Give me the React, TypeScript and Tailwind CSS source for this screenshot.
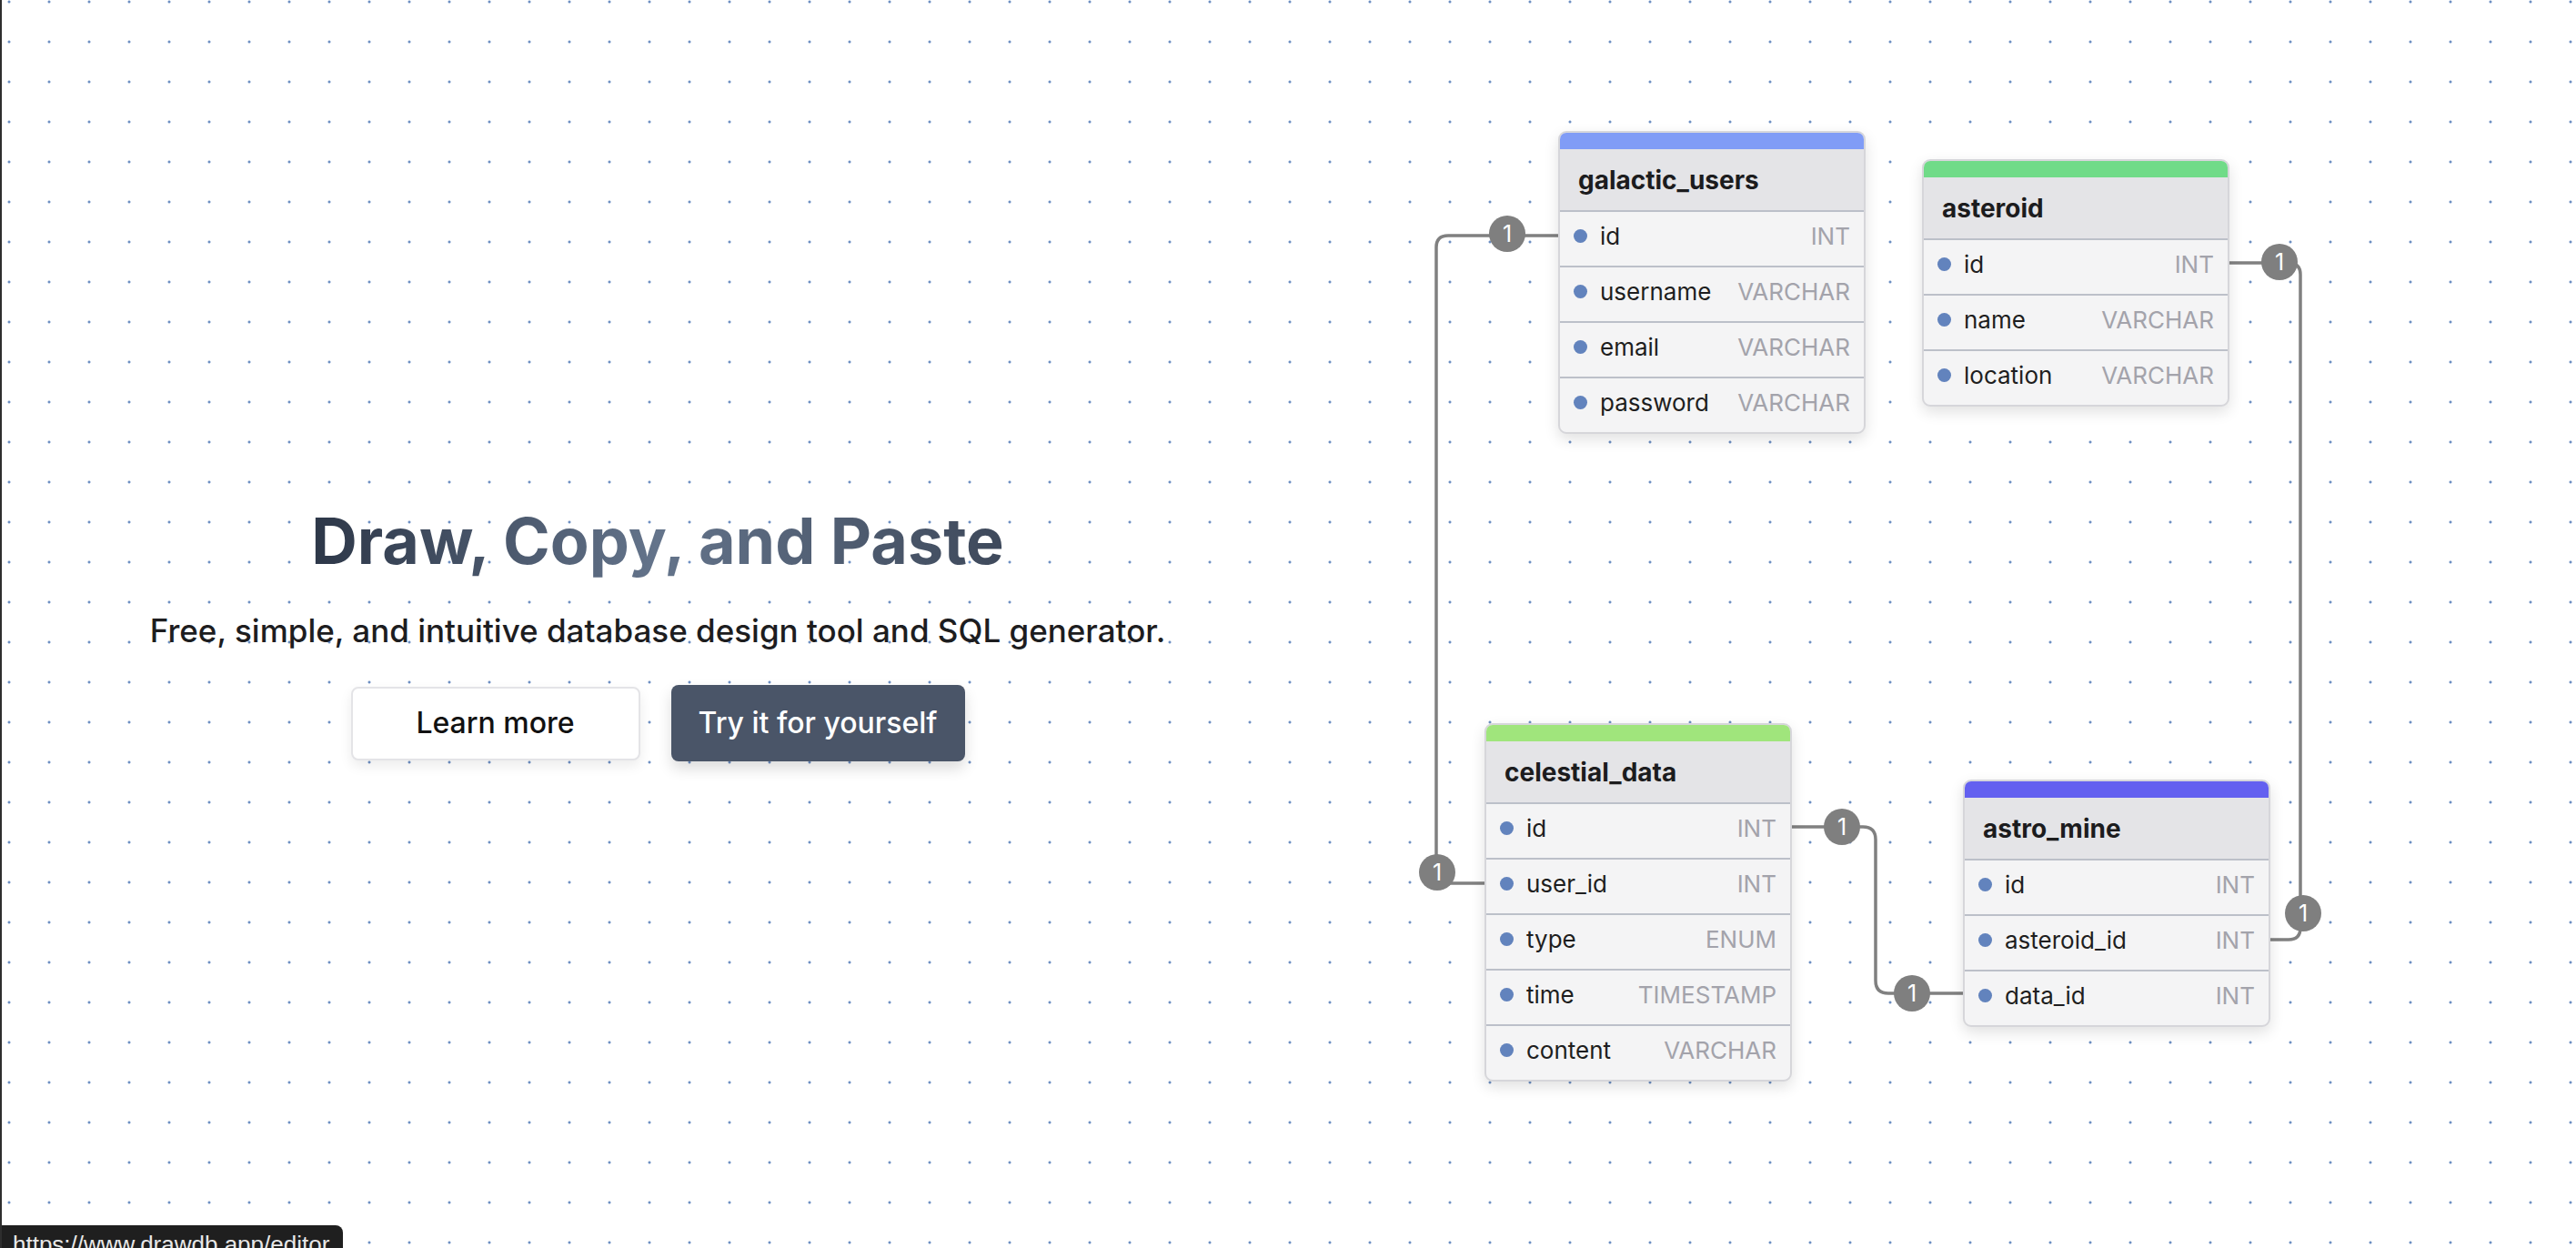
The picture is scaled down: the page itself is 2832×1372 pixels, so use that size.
const TABLES = [
  {
    name: "galactic_users",
    color: "#809cf6",
    x: 1713,
    y: 144,
    fields: [
      ["id", "INT"],
      ["username", "VARCHAR"],
      ["email", "VARCHAR"],
      ["password", "VARCHAR"],
    ],
  },
  {
    name: "asteroid",
    color: "#70db88",
    x: 2113,
    y: 175,
    fields: [
      ["id", "INT"],
      ["name", "VARCHAR"],
      ["location", "VARCHAR"],
    ],
  },
  {
    name: "celestial_data",
    color: "#a0e57c",
    x: 1632,
    y: 795,
    fields: [
      ["id", "INT"],
      ["user_id", "INT"],
      ["type", "ENUM"],
      ["time", "TIMESTAMP"],
      ["content", "VARCHAR"],
    ],
  },
  {
    name: "astro_mine",
    color: "#6360f0",
    x: 2158,
    y: 857,
    fields: [
      ["id", "INT"],
      ["asteroid_id", "INT"],
      ["data_id", "INT"],
    ],
  },
];

const LINKS = [
  {
    d: "M1713,259 H1592 Q1579,259 1579,272 V958 Q1579,971 1592,971 H1632",
    marks: [
      [1657, 257],
      [1580, 959],
    ],
  },
  {
    d: "M2451,289 H2516 Q2529,289 2529,302 V1020 Q2529,1033 2516,1033 H2496",
    marks: [
      [2506, 288],
      [2532, 1004],
    ],
  },
  {
    d: "M1970,909 H2048 Q2062,909 2062,923 V1078 Q2062,1092 2076,1092 H2158",
    marks: [
      [2025, 909],
      [2102, 1092],
    ],
  },
];

function Table({ table }: { table: (typeof TABLES)[number] }) {
  return (
    <div
      className="absolute w-[338px] overflow-hidden rounded-[9px] border-2 border-[#d6d6da] bg-[#f4f4f5] shadow-[0_6px_16px_rgba(0,0,0,0.12)]"
      style={{ left: table.x, top: table.y }}
    >
      <div className="h-[18px]" style={{ backgroundColor: table.color }} />
      <div className="flex h-[67px] items-center bg-[#e4e4e7] pl-[20px] text-[28px] font-bold text-[#1c1c1e]">
        {table.name}
      </div>
      {table.fields.map(([name, type]) => (
        <div
          key={name}
          className="flex h-[61px] items-center border-t-2 border-[#bcc0c9] pb-[6px] pl-[15px] pr-[15px] text-[26px]"
        >
          <span className="h-[15px] w-[15px] rounded-full bg-[#6283bd]" />
          <span className="ml-[14px] text-[#1e1e20]">{name}</span>
          <span className="ml-auto text-[#a3a3ab]">{type}</span>
        </div>
      ))}
    </div>
  );
}

export default function App() {
  return (
    <div className="relative flex h-[1372px] w-[2832px] overflow-hidden bg-white font-['Inter',sans-serif] [background-image:radial-gradient(circle,#6d8fc2_1.2px,transparent_1.8px)] [background-position:-12px_-20px] [background-size:44px_44px]">
      <div className="h-full w-[2px] shrink-0 bg-[#2e2e2e]" />

      <section className="flex w-[1442px] flex-col items-center pt-[552px]">
        <h1 className="bg-gradient-to-r from-[#2d3748] via-[#64748b] to-[#3e495b] bg-clip-text text-[70px] font-bold leading-[85px] text-transparent">
          Draw, Copy, and Paste
        </h1>
        <p className="mt-[35px] text-[35px] font-medium leading-[42px] text-[#1d1d1f]">
          Free, simple, and intuitive database design tool and SQL generator.
        </p>
        <div className="mt-[39px] flex items-center gap-[34px]">
          <button className="h-[81px] w-[318px] rounded-[8px] border-2 border-[#e4e4e7] bg-white text-[32px] font-medium text-[#111111] shadow-[0_6px_14px_rgba(0,0,0,0.08)]">
            Learn more
          </button>
          <button className="h-[84px] w-[323px] rounded-[8px] bg-[#4a5568] text-[32px] font-medium text-white shadow-[0_8px_16px_rgba(0,0,0,0.14)]">
            Try it for yourself
          </button>
        </div>
      </section>

      {/* diagram canvas */}
      <div className="pointer-events-none absolute inset-0">
        <svg className="absolute left-0 top-0" width={2832} height={1372}>
          {LINKS.map((link, i) => (
            <g key={i}>
              <path d={link.d} fill="none" stroke="#808080" strokeWidth={3.5} />
              {link.marks.map(([cx, cy], j) => (
                <g key={j}>
                  <circle cx={cx} cy={cy} r={20} fill="#7f7f7f" />
                  <text
                    x={cx}
                    y={cy + 9}
                    textAnchor="middle"
                    fill="#ffffff"
                    fontSize={25}
                    fontFamily="Inter, sans-serif"
                  >
                    1
                  </text>
                </g>
              ))}
            </g>
          ))}
        </svg>
        {TABLES.map((t) => (
          <Table key={t.name} table={t} />
        ))}
      </div>

      <div className="absolute left-[2px] top-[1347px] h-[44px] w-[375px] rounded-tr-[8px] bg-[#1f1f1f] pl-[12px] pt-[6px] font-['Liberation_Sans',sans-serif] text-[26px] leading-[30px] text-[#e8e8e8]">
        https://www.drawdb.app/editor
      </div>
    </div>
  );
}
